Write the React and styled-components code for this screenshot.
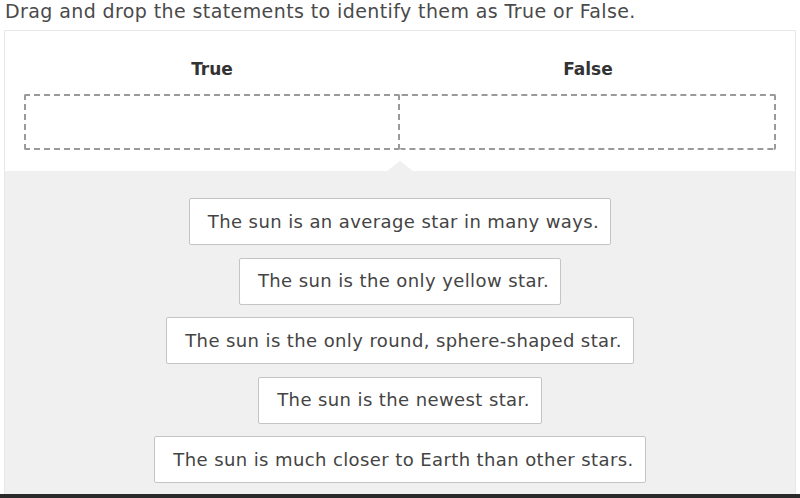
import React from 'react'
import styled, { createGlobalStyle } from 'styled-components';

const GlobalStyle = createGlobalStyle`
  html, body {
    margin:0;
    padding:0;
    background:#fff;
  }
  body {
    font-family:"DejaVu Sans", "Open Sans", sans-serif;
    color:#444;
  }
`;

const Page = styled.div`
  width:800px;
  height:498px;
  display:flex;
  flex-direction:column;
  overflow:hidden;
`;

const Prompt = styled.div`
  height:30px;
  padding-left:5px;
  font-size:19px;
  line-height:22px;
  letter-spacing:0.4px;
  color:#4a4a4a;
  white-space:nowrap;
`;

const Card = styled.div`
  flex:1;
  margin:0 4px;
  border:1px solid #e8e8e8;
  border-bottom:none;
  display:flex;
  flex-direction:column;
`;

const Targets = styled.div`
  display:grid;
  grid-template-columns:1fr 1fr;
  padding:26px 19px 21px 19px;
  background:#fff;
`;

const Column = styled.div`
  display:flex;
  flex-direction:column;
  align-items:center;
`;

const Heading = styled.div`
  height:24px;
  line-height:24px;
  font-size:17px;
  font-weight:700;
  color:#333;
  margin-bottom:13px;
`;

const Zone = styled.div`
  align-self:stretch;
  height:52px;
  border:2px dashed #9a9a9a;
  border-left:${p => (p.$first ? '2px dashed #9a9a9a' : 'none')};
  border-radius:2px;
`;

const Pool = styled.div`
  position:relative;
  flex:1;
  background:#f0f0f0;
  display:flex;
  flex-direction:column;
  align-items:center;
  gap:12.5px;
  padding-top:27px;

  &::before {
    content:'';
    position:absolute;
    top:-10px;
    left:50%;
    margin-left:-13px;
    border-left:13px solid transparent;
    border-right:13px solid transparent;
    border-bottom:10px solid #f0f0f0;
  }
`;

const Statement = styled.div`
  box-sizing:border-box;
  height:47px;
  display:flex;
  align-items:center;
  padding:0 11px 1px 18px;
  background:#fff;
  border:1px solid #c4c4c4;
  border-radius:2px;
  font-size:18px;
  letter-spacing:0.4px;
  color:#444;
  white-space:nowrap;
`;

const BottomBar = styled.div`
  height:4px;
  background:#2a2a2a;
`;

const statements = [
  'The sun is an average star in many ways.',
  'The sun is the only yellow star.',
  'The sun is the only round, sphere-shaped star.',
  'The sun is the newest star.',
  'The sun is much closer to Earth than other stars.'
];

export default function App() {
  return (
    <Page>
      <GlobalStyle />
      <Prompt>Drag and drop the statements to identify them as True or False.</Prompt>
      <Card>
        <Targets>
          <Column>
            <Heading>True</Heading>
            <Zone $first />
          </Column>
          <Column>
            <Heading>False</Heading>
            <Zone />
          </Column>
        </Targets>
        <Pool>
          {statements.map(s => (
            <Statement key={s}>{s}</Statement>
          ))}
        </Pool>
      </Card>
      <BottomBar />
    </Page>
  );
}
